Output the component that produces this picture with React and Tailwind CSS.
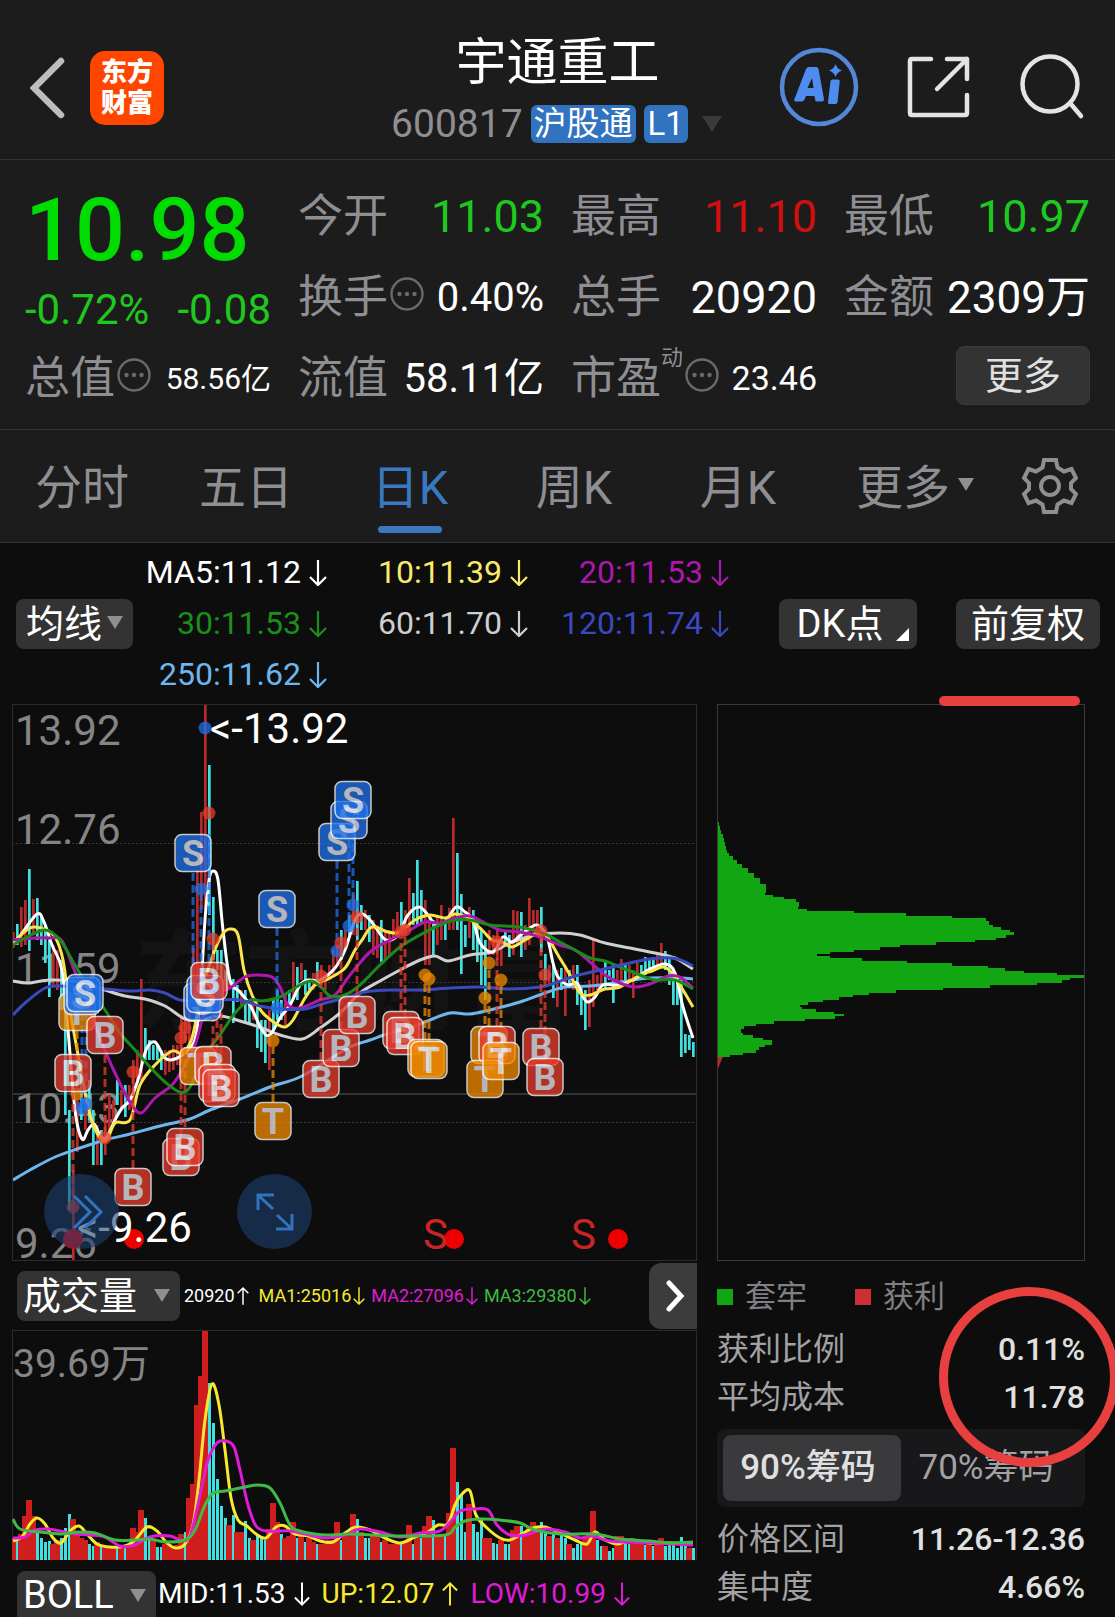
import { useState } from "react";

// Daily candles, oldest first: colour (r = up, c = down), high and low
const CANDLES =
  "r932-948 c924-945 r907-947 r900-945 c869-951 r899-935 c898-940 c915-945 c925-963 c940-997 r945-985 r950-990 c960-1010 c985-1115 c1110-1210 r1170-1261 r1100-1152 c1060-1120 r1095-1130 c1080-1120 c1110-1165 r1125-1165 c1130-1165 r1115-1155 r1095-1140 r1100-1125 c1080-1105 r1090-1110 c1085-1117 r1085-1110 r1060-1100 r1050-1080 r979-1080 c1028-1060 c1040-1060 c1045-1060 c1045-1060 c1050-1070 r1050-1075 r1050-1072 r1045-1070 r1045-1065 r1015-1055 r1010-1040 r1000-1045 r948-1000 r870-980 r812-909 r704-910 c765-915 c897-960 c950-970 c950-990 c970-990 r975-990 c979-1023 c985-1002 r990-1005 c990-1022 c1000-1025 r1000-1020 c1005-1048 c1020-1052 c1020-1063 r1010-1070 c1000-1030 c990-1020 c1000-1020 r995-1025 c990-1010 r962-1000 c967-1000 r963-980 c970-995 c980-990 r973-990 c962-985 r965-985 r972-990 r965-980 r950-975 r945-965 c930-960 r930-950 c915-935 r894-935 c881-940 c905-930 r910-930 c915-942 r920-955 r925-958 c920-962 r930-960 r930-955 r919-940 r912-935 c902-935 r910-930 r878-930 c893-925 c860-925 c890-925 r900-965 r915-965 c920-957 r915-945 r905-940 c920-940 r908-930 r818-930 c853-930 c894-974 c925-947 r907-938 c910-950 c920-962 c930-985 c940-1000 r930-955 r935-955 r930-960 r940-966 c930-945 c935-957 r910-955 r911-945 c912-957 r925-950 r898-945 r910-935 r910-930 c907-952 c954-980 r965-985 c965-998 r970-1007 c968-990 r965-1016 c970-985 r965-990 c965-1005 c985-1015 c990-1030 r980-1027 r938-1007 r975-995 r970-985 c962-990 c970-980 c965-1003 r970-980 r959-985 c965-980 r965-980 r970-998 r963-980 c965-980 c957-975 c960-972 c957-970 r955-970 r943-965 c951-970 c955-985 c970-1005 c975-1005 c980-1057 c1034-1053 c1035-1050 c1042-1057";

const VOLUMES =
  "r22 c20 r26 r44 r60 r44 c28 c22 c18 c19 r16 r20 c22 c32 c46 r41 r28 r22 r20 c16 c14 r18 c14 r14 r14 r13 c12 r12 c12 r13 r32 r28 r50 c42 c24 r20 c13 c13 r16 r16 r14 r15 r26 c28 r62 r76 r155 r184 r229 c177 c137 c81 c54 c42 r35 c45 r28 r28 c39 c22 r20 c24 c24 c20 r31 r57 r38 c26 r22 r24 r38 c22 r24 c18 r22 r18 c16 r16 r16 r20 r20 r38 c20 r24 r28 r46 c41 r28 c22 c22 r26 r24 c18 r20 r16 r16 r16 c16 r18 r35 c16 r24 c22 r34 r44 c40 r24 r26 c24 r47 r112 c78 c65 c28 r56 c36 c28 c40 r22 r22 c17 c16 r20 c16 c16 r30 r34 c34 r28 r34 r38 r32 c38 c28 r24 c26 r22 c26 c22 r16 c12 c16 c16 r24 r26 r49 c20 c14 r14 c9 c12 r24 r24 c20 c16 r16 r16 r17 c15 r18 c14 r18 r22 c14 c15 c15 c12 c23 c14 r12 c12";

const PRICE_LINES = [
  {
    color: "#d0d0d0",
    points:
      "13,981 28,983 50,980 80,982 105,990 125,996 145,999 165,1006 185,1019 200,1020 220,1016 240,1021 262,1028 280,1035 302,1039 320,1028 340,1013 360,993 380,981 400,970 420,960 435,956 448,961 470,955 492,952 510,943 535,935 560,933 580,935 605,943 630,948 655,953 675,958 693,969",
  },
  {
    color: "#6db6ee",
    points:
      "13,1180 30,1170 55,1157 80,1148 105,1140 130,1134 160,1126 190,1119 210,1110 240,1099 270,1087 300,1077 330,1059 350,1047 370,1040 390,1033 410,1028 430,1020 450,1013 470,1014 490,1010 520,1002 545,993 565,987 590,986 620,982 650,978 680,978 693,979",
  },
  {
    color: "#ffffff",
    points:
      "13,943 20,936 37,914 44,922 52,945 62,970 68,1030 75,1110 82,1139 88,1130 94,1124 100,1135 106,1138 115,1120 122,1108 130,1100 138,1080 146,1050 155,1042 165,1058 175,1059 188,1050 196,1035 201,985 205,920 209,880 213,871 218,880 223,930 230,980 240,992 250,1005 262,1030 270,1035 280,1018 290,1005 300,985 308,980 320,980 335,968 345,950 355,920 362,914 370,920 376,928 386,940 398,935 408,915 419,907 428,915 435,924 445,922 456,907 465,912 473,920 480,943 493,952 503,937 512,942 523,933 537,925 547,937 553,963 558,977 568,985 577,983 583,997 588,1002 595,997 603,985 617,985 633,980 648,970 665,964 675,973 683,1007 693,1038",
  },
  {
    color: "#fbe54e",
    points:
      "13,943 30,928 44,929 55,937 63,960 70,1010 80,1065 90,1115 100,1138 107,1140 115,1123 130,1120 140,1085 155,1065 172,1051 182,1053 192,1038 202,990 213,955 222,935 230,929 238,935 244,970 252,995 262,1012 275,1023 285,1027 293,1020 305,998 315,985 330,978 345,968 355,950 362,940 372,927 388,932 400,932 415,920 430,915 445,918 455,914 468,918 482,930 492,940 502,942 512,947 525,940 540,932 548,938 558,955 570,975 580,993 590,995 605,989 620,987 640,975 652,971 663,967 672,973 683,990 693,1007",
  },
  {
    color: "#ae17ae",
    points:
      "13,940 35,938 50,938 62,941 75,972 87,1003 100,1038 115,1073 130,1102 141,1113 155,1098 172,1085 182,1070 195,1045 205,1010 215,995 230,988 245,977 258,975 272,977 280,987 288,1005 300,1008 320,1000 335,995 350,975 370,952 390,940 410,930 425,922 440,923 455,918 470,916 485,923 500,930 520,932 540,937 560,945 575,950 590,962 605,975 620,983 635,987 650,984 668,976 680,977 693,988",
  },
  {
    color: "#1b8a1b",
    points:
      "13,945 25,938 45,930 60,940 75,965 90,990 105,1010 120,1033 135,1050 150,1067 165,1082 180,1092 190,1087 205,1055 220,1035 235,1013 250,1000 262,1001 280,997 300,985 312,981 322,988 330,996 345,995 360,985 380,965 400,947 420,935 440,925 455,920 470,920 490,925 505,926 525,928 545,934 560,942 575,950 590,958 605,961 620,967 640,975 655,980 675,980 693,989",
  },
  {
    color: "#3a49bd",
    points:
      "13,1015 25,1003 45,988 60,986 80,988 105,989 130,991 150,990 165,993 180,1000 200,1000 220,1000 240,1000 260,1006 280,1009 305,1009 325,1003 345,998 365,992 390,990 420,990 450,988 480,987 510,989 540,987 555,983 575,976 600,970 625,964 650,959 672,958 683,961 693,966",
  },
];

const VOLUME_LINES = [
  {
    color: "#f7e92e",
    points:
      "13,1541 22,1537 30,1524 37,1518 45,1524 53,1538 61,1543 70,1531 79,1526 87,1534 97,1544 110,1547 125,1546 135,1540 147,1527 157,1531 167,1543 176,1548 185,1544 193,1525 199,1480 205,1420 212,1384 219,1405 225,1450 231,1498 238,1520 247,1526 256,1534 266,1538 276,1527 285,1526 295,1534 308,1536 320,1541 333,1542 345,1533 356,1527 370,1530 385,1538 400,1543 415,1537 428,1532 438,1525 448,1524 455,1505 462,1494 470,1491 476,1515 487,1528 500,1538 510,1540 520,1535 533,1528 545,1527 560,1533 575,1540 587,1544 595,1532 605,1540 618,1544 630,1540 650,1543 670,1543 693,1544",
  },
  {
    color: "#e01ad8",
    points:
      "13,1538 25,1537 35,1530 48,1529 60,1531 75,1534 90,1535 105,1537 120,1546 135,1545 150,1537 170,1536 180,1540 190,1536 200,1495 208,1460 217,1443 226,1441 234,1447 240,1470 248,1505 256,1526 266,1531 278,1531 290,1531 305,1534 325,1538 345,1535 360,1529 380,1532 400,1537 420,1533 440,1531 452,1520 460,1511 475,1509 488,1510 497,1525 510,1535 525,1535 545,1529 565,1532 580,1538 593,1536 610,1541 650,1543 693,1545",
  },
  {
    color: "#3fba44",
    points:
      "13,1519 20,1529 40,1532 60,1534 80,1532 95,1533 115,1540 135,1540 150,1539 165,1542 185,1540 195,1530 205,1505 213,1493 225,1491 240,1488 258,1485 270,1488 280,1503 290,1525 300,1531 325,1535 350,1534 400,1536 445,1535 455,1527 465,1521 480,1519 500,1520 520,1523 535,1530 560,1534 595,1534 620,1539 650,1541 670,1543 693,1542",
  },
];

// Trade marks: letter, centre x, centre y
const MARKS = [
  ["T", 77, 1012],
  ["S", 82, 996],
  ["S", 85, 993],
  ["B", 105, 1035],
  ["B", 73, 1073],
  ["B", 133, 1187],
  ["B", 181, 1157],
  ["B", 185, 1147],
  ["S", 193, 853],
  ["S", 202, 1002],
  ["S", 205, 994],
  ["B", 209, 981],
  ["T", 198, 1066],
  ["B", 213, 1065],
  ["B", 217, 1083],
  ["B", 221, 1088],
  ["S", 277, 909],
  ["T", 273, 1121],
  ["B", 321, 1079],
  ["B", 341, 1048],
  ["B", 357, 1015],
  ["S", 337, 842],
  ["S", 349, 820],
  ["S", 353, 800],
  ["B", 401, 1030],
  ["B", 405, 1036],
  ["T", 426, 1058],
  ["T", 429, 1060],
  ["T", 489, 1045],
  ["B", 497, 1045],
  ["T", 485, 1079],
  ["T", 501, 1061],
  ["B", 541, 1047],
  ["B", 545, 1077],
];

// Where each trade happened, and how far its dashed leader runs
const TRADES = [
  ["T", 77, 1094, 1031],
  ["S", 82, 1108, 1013],
  ["S", 86, 1104, 1013],
  ["B", 105, 1138, 1055],
  ["B", 73, 1207, 1092],
  ["B", 133, 1072, 1168],
  ["B", 181, 1038, 1137],
  ["B", 185, 1028, 1127],
  ["S", 201, 889, 985],
  ["S", 205, 728, 728],
  ["B", 209, 813, 813],
  ["B", 213, 939, 1046],
  ["B", 217, 983, 1064],
  ["B", 221, 985, 1068],
  ["S", 277, 1008, 928],
  ["T", 273, 1041, 1102],
  ["B", 321, 976, 1060],
  ["S", 337, 951, 861],
  ["B", 341, 943, 1029],
  ["S", 349, 926, 840],
  ["S", 353, 905, 820],
  ["B", 357, 917, 996],
  ["B", 401, 932, 1011],
  ["B", 405, 930, 1017],
  ["T", 425, 975, 1040],
  ["T", 429, 979, 1041],
  ["T", 489, 963, 1026],
  ["B", 497, 942, 1026],
  ["T", 485, 998, 1060],
  ["T", 501, 980, 1042],
  ["B", 541, 931, 1028],
  ["B", 545, 975, 1058],
];

const MARK_COLORS = { B: "#e63c2c", S: "#1f70e8", T: "#ee8900" };

// Chip distribution: depth and bar length for each price step
const CHIPS = [
  [0, 1], [4, 2], [8, 3], [12, 4], [16, 6], [20, 7], [24, 8], [28, 9], [32, 10],
  [35, 12], [38, 16], [42, 20], [46, 25], [50, 31], [55, 37], [60, 43],
  [66, 49], [75, 48], [77, 56], [79, 67], [81, 79], [84, 82], [89, 81],
  [91, 90], [93, 137], [95, 189], [98, 235], [100, 269], [103, 272],
  [107, 276], [109, 284], [112, 293], [114, 297], [117, 289], [120, 279],
  [122, 258], [124, 219], [127, 183], [129, 163], [132, 137], [134, 113],
  [136, 100], [138, 113], [140, 145], [143, 190], [145, 235], [148, 271],
  [150, 288], [153, 307], [155, 340], [157, 368], [160, 353], [162, 345],
  [165, 320], [167, 273], [170, 226], [172, 179], [175, 152], [177, 136],
  [179, 122], [182, 106], [184, 91], [187, 83], [189, 85], [191, 99],
  [194, 117], [196, 127], [198, 118], [201, 88], [203, 57], [206, 39],
  [208, 27], [211, 24], [215, 26], [217, 36], [220, 46], [222, 55], [227, 48],
  [229, 42], [232, 39], [235, 26], [237, 13], [239, 0],
];

const TABS = ["分时", "五日", "日K", "周K", "月K"];

const barColor = (code) => (code === "r" ? "#b8292a" : "#3fe0e0");

const parseLine = (points) => points.split(" ").map((p) => p.split(",").map(Number));

const smooth = (points) => {
  const p = parseLine(points);
  let d = `M${p[0][0]} ${p[0][1]}`;
  for (let i = 0; i < p.length - 1; i++) {
    const a = p[i - 1] || p[i];
    const b = p[i];
    const c = p[i + 1];
    const e = p[i + 2] || c;
    d += `C${b[0] + (c[0] - a[0]) / 6} ${b[1] + (c[1] - a[1]) / 6} ${
      c[0] - (e[0] - b[0]) / 6
    } ${c[1] - (e[1] - b[1]) / 6} ${c[0]} ${c[1]}`;
  }
  return d;
};

const stepPath = () => {
  let d = "M717 818";
  CHIPS.forEach(([y, w]) => {
    d += `V${818 + y}H${717 + w}`;
  });
  return `${d}V1058H717Z`;
};

const Triangle = ({ className }) => (
  <svg viewBox="0 0 16 13" className={className} fill="currentColor" aria-hidden="true">
    <path d="M0 0H16L8 13Z" />
  </svg>
);

const Arrow = ({ up, className }) => (
  <svg
    viewBox="0 0 18 26"
    className={`${className} ${up ? "rotate-180" : ""}`}
    fill="none"
    stroke="currentColor"
    strokeWidth="2.2"
    aria-hidden="true"
  >
    <path d="M9 0V25M1 17L9 25L17 17" />
  </svg>
);

const MoreDots = () => (
  <svg viewBox="0 0 34 34" className="mb-2 ml-[2px] size-[34px] shrink-0 text-[#6a6a6c]" aria-hidden="true">
    <circle cx="17" cy="17" r="15.5" fill="none" stroke="currentColor" strokeWidth="2.4" />
    <circle cx="9.5" cy="17" r="2.2" fill="currentColor" />
    <circle cx="17" cy="17" r="2.2" fill="currentColor" />
    <circle cx="24.5" cy="17" r="2.2" fill="currentColor" />
  </svg>
);

const Dropdown = ({ label, options, className, triangleClass }) => (
  <div className="relative shrink-0">
    <select
      aria-label={label}
      className={`block cursor-pointer appearance-none rounded-lg bg-[#333333] text-[38px] leading-[48px] text-white outline-none ${className}`}
    >
      {options.map((option) => (
        <option key={option}>{option}</option>
      ))}
    </select>
    <Triangle className={`pointer-events-none absolute h-[13px] w-4 text-[#8e8e93] ${triangleClass}`} />
  </div>
);

const Quote = ({ label, value, valueClass = "text-[45px] text-white", info, sup }) => (
  <div className="flex h-[81px] items-center justify-between whitespace-nowrap">
    <span className="flex items-center text-[45px] text-[#8e8e93]">
      {label}
      {sup && <sup className="mb-5 text-[22px] leading-none">{sup}</sup>}
      {info && <MoreDots />}
    </span>
    <span className={valueClass}>{value}</span>
  </div>
);

const MaValue = ({ text, className }) => (
  <span className={`flex items-center justify-end gap-2 ${className}`}>
    {text}
    <Arrow className="h-[26px] w-[18px]" />
  </span>
);

const IndicatorValue = ({ text, up, className }) => (
  <span className={`flex items-center gap-[2px] ${className}`}>
    {text}
    <Arrow up={up} className="h-[26px] w-3" />
  </span>
);

const Header = () => (
  <header className="flex h-40 items-center border-b border-[#333333] px-[30px]">
    <div className="flex flex-1 items-center gap-6 pt-4">
      <button type="button" aria-label="返回">
        <svg viewBox="0 0 36 62" className="h-[62px] w-9" fill="none" stroke="#bdbdbd" strokeWidth="6.5" strokeLinecap="round">
          <path d="M31 4L4 31L31 58" strokeLinejoin="miter" />
        </svg>
      </button>
      <a
        href="#home"
        className="flex size-[74px] flex-col items-center justify-center rounded-[15px] bg-[#ff4600] text-[26px] leading-[31px] font-black text-white"
      >
        <span>东方</span>
        <span>财富</span>
      </a>
    </div>
    <div className="flex flex-col items-center pt-6">
      <h1 className="text-[51px] leading-[64px] text-white">宇通重工</h1>
      <div className="flex items-center gap-2 text-[39px] leading-[58px] text-[#8e8e93]">
        <span>600817</span>
        <span className="rounded-md bg-[#3273c0] px-[3px] text-[33px] leading-[38px] text-white">沪股通</span>
        <span className="rounded-md bg-[#3273c0] px-1 text-[33px] leading-[38px] text-white">L1</span>
        <Triangle className="ml-1 h-4 w-6 text-[#3a3a3a]" />
      </div>
    </div>
    <div className="flex flex-1 items-center justify-end gap-12 pt-[14px]">
      <button type="button" aria-label="AI">
        <svg viewBox="0 0 80 80" className="size-20" fill="#4f8cf0">
          <circle cx="40" cy="40" r="37" fill="none" stroke="#5487d8" strokeWidth="4.5" />
          <path
            fillRule="evenodd"
            d="M27 22Q28 20 30 20H37Q39 20 39.5 22L45 52Q45 54.5 43 54.5H38Q36 54.5 36 52L35.5 49H27L25.5 52.5Q24.5 54.5 22.5 54.5H17Q14.5 54.5 15.5 52ZM33 31L28.5 41H34.5Z"
          />
          <path d="M51.5 34Q51.8 32.5 53.5 32.5H59Q61 32.5 60.7 34.5L58.5 55Q58 57 56.5 57H50.5Q48.5 57 49 55Z" />
          <path d="M56.5 17Q58 22 63 23.5Q58 25 56.5 30Q55 25 50 23.5Q55 22 56.5 17Z" />
        </svg>
      </button>
      <button type="button" aria-label="分享">
        <svg viewBox="0 0 64 64" className="size-16" fill="none" stroke="#e4e4e4" strokeWidth="4.5" strokeLinecap="round" strokeLinejoin="round">
          <path d="M24 4H5Q3 4 3 6V58Q3 60 5 60H58Q60 60 60 58V40M40 4H60V24M60 4L30 34" />
        </svg>
      </button>
      <button type="button" aria-label="搜索">
        <svg viewBox="0 0 66 66" className="size-[66px]" fill="none" stroke="#e4e4e4" strokeWidth="4.5" strokeLinecap="round">
          <circle cx="31" cy="30" r="27.5" />
          <path d="M51 49L62 62" />
        </svg>
      </button>
    </div>
  </header>
);

const QuotePanel = () => (
  <section className="grid grid-cols-4 gap-x-[27px] border-b border-[#333333] px-[25px] pt-4 pb-[10px]">
    <div className="row-span-2">
      <p className="h-[104px] text-[88px] leading-[108px] font-medium text-[#00dc00]">10.98</p>
      <p className="flex h-[58px] items-center justify-between text-[42px] text-[#1ec81e]">
        <span>-0.72%</span>
        <span>-0.08</span>
      </p>
    </div>
    <Quote label="今开" value="11.03" valueClass="text-[45px] text-[#1ec81e]" />
    <Quote label="最高" value="11.10" valueClass="text-[45px] text-[#d01010]" />
    <Quote label="最低" value="10.97" valueClass="text-[45px] text-[#1ec81e]" />
    <Quote label="换手" value="0.40%" valueClass="text-[40px] text-white" info />
    <Quote label="总手" value="20920" />
    <Quote label="金额" value="2309万" valueClass="text-[44px] text-white" />
    <Quote label="总值" value="58.56亿" valueClass="text-[30px] text-white" info />
    <Quote label="流值" value="58.11亿" valueClass="text-[40px] text-white" />
    <Quote label="市盈" sup="动" value="23.46" valueClass="text-[34px] text-white" info />
    <div className="flex h-[81px] items-center justify-end pb-[6px]">
      <button type="button" className="h-[59px] w-[134px] rounded-lg border border-[#3a3a3a] bg-[#333333] text-[38px] leading-none text-[#e0e0e0]">
        更多
      </button>
    </div>
  </section>
);

const PeriodTabs = () => {
  const [active, setActive] = useState("日K");

  return (
    <nav className="grid h-[113px] grid-cols-[164fr_164fr_164fr_164fr_164fr_190fr_105fr] border-b border-[#333333] text-[47px] text-[#8e8e93]">
      {TABS.map((tab) => (
        <button
          key={tab}
          type="button"
          onClick={() => setActive(tab)}
          className={`relative pt-1 ${active === tab ? "text-[#3a78c0]" : ""}`}
        >
          {tab}
          {active === tab && (
            <span className="absolute bottom-[9px] left-1/2 h-[7px] w-16 -translate-x-1/2 rounded-full bg-[#3a78c0]" />
          )}
        </button>
      ))}
      <button type="button" className="flex items-center justify-center gap-2 pt-1">
        更多
        <Triangle className="mb-2 h-[13px] w-4" />
      </button>
      <button type="button" aria-label="设置" className="flex items-center pl-3">
        <svg viewBox="0 0 56 58" className="h-[58px] w-14" fill="none" stroke="currentColor" strokeWidth="4">
          <path d="M22 3H34L35.5 10.5L42 14.5L49.5 12L54 21L49 26V32L54 37L49.5 46L42 43.5L35.5 47.5L34 55H22L20.5 47.5L14 43.5L6.5 46L2 37L7 32V26L2 21L6.5 12L14 14.5L20.5 10.5Z" />
          <circle cx="28" cy="29" r="9" />
        </svg>
      </button>
    </nav>
  );
};

const MaBar = () => (
  <section className="flex h-[161px] items-center pr-[15px] pl-4">
    <Dropdown label="均线" options={["均线"]} className="h-[50px] w-[117px] pl-[10px]" triangleClass="right-[10px] top-[17px]" />
    <div className="grid grid-cols-[194px_201px_201px] text-[32px] leading-[51px]">
      <MaValue text="MA5:11.12" className="text-white" />
      <MaValue text="10:11.39" className="text-[#fbe96a]" />
      <MaValue text="20:11.53" className="text-[#ae17ae]" />
      <MaValue text="30:11.53" className="text-[#1b8f1b]" />
      <MaValue text="60:11.70" className="text-[#cfcfcf]" />
      <MaValue text="120:11.74" className="text-[#3a49bd]" />
      <MaValue text="250:11.62" className="text-[#6db6ee]" />
    </div>
    <div className="ml-auto flex gap-[39px] text-[38px] leading-[48px] text-white">
      <button type="button" className="relative h-[50px] w-[138px] rounded-lg bg-[#333333] pr-4">
        DK点
        <svg viewBox="0 0 13 13" className="absolute right-2 bottom-2 size-[13px]" fill="currentColor" aria-hidden="true">
          <path d="M13 0V13H0Z" />
        </svg>
      </button>
      <button type="button" className="h-[50px] w-[144px] rounded-lg bg-[#333333]">
        前复权
      </button>
    </div>
  </section>
);

const PriceChart = () => (
  <div className="relative">
    <svg viewBox="12 704 685 557" className="block w-full" fontSize="42">
      <text x="133" y="1022" fontSize="110" fontWeight="700" fill="#131313">
        东方财富
      </text>
      <path d="M12 843.5H697M12 982.5H697M12 1122.5H697" stroke="#3a3a3a" strokeDasharray="2 2" />
      <path d="M12 1094H697" stroke="#333333" strokeWidth="2" />
      <g fill="#858585">
        <text x="15" y="745">13.92</text>
        <text x="15" y="844">12.76</text>
        <text x="15" y="983">11.59</text>
        <text x="15" y="1123">10.43</text>
        <text x="15" y="1258">9.26</text>
      </g>
      {CANDLES.split(" ").map((item, i) => {
        const [high, low] = item.slice(1).split("-").map(Number);
        return (
          <rect key={i} x={12 + i * 4} y={high} width="2.7" height={low - high} fill={barColor(item[0])} />
        );
      })}
      {PRICE_LINES.map((line) => (
        <path key={line.color} d={smooth(line.points)} fill="none" stroke={line.color} strokeWidth="3" />
      ))}
      <path d="M193 873V1000M209 962V832" stroke="#1f70e8" strokeWidth="3" strokeDasharray="8 4" opacity="0.75" />
      {TRADES.map(([type, x, y, end]) => (
        <g key={`${x}-${y}`} opacity="0.75">
          <path d={`M${x} ${end}V${y}`} stroke={MARK_COLORS[type]} strokeWidth="3" strokeDasharray="8 4" />
          <circle cx={x} cy={y} r="6.5" fill={MARK_COLORS[type]} />
        </g>
      ))}
      {MARKS.map(([type, x, y]) => (
        <g key={`${x}-${y}`} opacity="0.77">
          <rect x={x - 18} y={y - 18.5} width="36" height="37" rx="7" fill={MARK_COLORS[type]} stroke="#ffffff" strokeWidth="1.5" />
          <text x={x} y={y + 13} fontSize="36" fontWeight="700" textAnchor="middle" fill="#e8e8f0">
            {type}
          </text>
        </g>
      ))}
      <g fill="#ee0000">
        <circle cx="73" cy="1239" r="10" />
        <circle cx="134" cy="1239" r="10" />
        <circle cx="454" cy="1239" r="10" />
        <circle cx="618" cy="1239" r="10" />
      </g>
      <g fill="#c92525">
        <text x="423" y="1249">S</text>
        <text x="571" y="1249">S</text>
      </g>
      <g fill="#ffffff">
        <text x="210" y="743">{"<-13.92"}</text>
        <text x="77" y="1242">{"<-9.26"}</text>
      </g>
      <rect x="12.5" y="704.5" width="684" height="556" fill="none" stroke="#2c2c2c" />
    </svg>
    <button type="button" aria-label="展开" className="absolute bottom-3 left-8 flex size-[75px] items-center justify-center rounded-full bg-[#1c3f6e]/60">
      <svg viewBox="0 0 32 36" className="ml-3 h-9 w-8" fill="none" stroke="#3273c0" strokeWidth="3">
        <path d="M2 2L18 18L2 34M13 2L29 18L13 34" />
      </svg>
    </button>
    <button type="button" aria-label="全屏" className="absolute bottom-3 left-[225px] flex size-[75px] items-center justify-center rounded-full bg-[#1c3f6e]/60">
      <svg viewBox="0 0 38 38" className="size-[38px]" fill="none" stroke="#3273c0" strokeWidth="3">
        <path d="M2 17V2H18M2 2L17 16M36 21V36H20M36 36L21 22" />
      </svg>
    </button>
  </div>
);

const VolumeChart = () => (
  <svg viewBox="12 1330 685 230" className="block w-full">
    <path d="M12 1330.5H697M696.5 1330V1560M12.5 1330V1560M12 1559.5H697" stroke="#2c2c2c" />
    <text x="13" y="1377" fontSize="39" fill="#858585">
      39.69万
    </text>
    {VOLUMES.split(" ").map((item, i) => {
      const up = item[0] === "r";
      const height = Number(item.slice(1));
      return (
        <rect
          key={i}
          x={up ? 10 + i * 4 : 12 + i * 4}
          y={1560 - height}
          width={up ? 6 : 3}
          height={height}
          fill={up ? "#d01e1e" : "#3fe0e0"}
        />
      );
    })}
    {VOLUME_LINES.map((line) => (
      <path key={line.color} d={smooth(line.points)} fill="none" stroke={line.color} strokeWidth="3" />
    ))}
  </svg>
);

const ChipPanel = () => {
  const [range, setRange] = useState("90%筹码");

  return (
    <aside className="flex flex-col">
      <div className="relative">
        <svg viewBox="717 704 368 557" className="block w-full">
          <path d={stepPath()} fill="#12a612" />
          <path d="M717 1057H723L721 1061L718 1069H717Z" fill="#b8292a" />
          <rect x="717.5" y="704.5" width="367" height="556" fill="none" stroke="#3a3a3a" />
        </svg>
        <span className="absolute -top-2 right-[5px] h-[10px] w-[141px] rounded-full bg-[#e8403f]" />
      </div>
      <div className="flex h-16 items-center gap-3 pt-2 text-[31px] text-[#808084]">
        <span className="size-4 bg-[#12a612]" />
        <span>套牢</span>
        <span className="ml-9 size-4 bg-[#cc3030]" />
        <span>获利</span>
      </div>
      <div className="relative">
        <dl className="grid grid-cols-2 text-[32px] leading-[48px] text-[#a2a2a4]">
          <dt>获利比例</dt>
          <dd className="text-right font-medium text-[#e0e0e0]">0.11%</dd>
          <dt>平均成本</dt>
          <dd className="text-right font-medium text-[#e0e0e0]">11.78</dd>
        </dl>
        <span className="pointer-events-none absolute -top-[38px] left-[222px] z-10 size-[180px] rounded-full border-[9px] border-[#e8403f]" />
      </div>
      <div className="mt-2 grid h-[78px] grid-cols-2 rounded-lg bg-[#18181a] p-[6px] text-[35px]">
        {["90%筹码", "70%筹码"].map((option) => (
          <button
            key={option}
            type="button"
            onClick={() => setRange(option)}
            className={`rounded-lg pr-2 ${
              range === option ? "bg-[#3a3a3c] font-medium text-[#e0e0e0]" : "text-[#a2a2a4]"
            }`}
          >
            {option}
          </button>
        ))}
      </div>
      <dl className="mt-2 grid grid-cols-[auto_1fr] text-[32px] leading-[48px] text-[#a2a2a4]">
        <dt>价格区间</dt>
        <dd className="text-right font-medium text-[#e0e0e0]">11.26-12.36</dd>
        <dt>集中度</dt>
        <dd className="text-right font-medium text-[#e0e0e0]">4.66%</dd>
      </dl>
    </aside>
  );
};

const App = () => (
  <main className="min-h-screen overflow-hidden bg-[#0d0d0d] font-['Roboto','Noto_Sans_CJK_SC',sans-serif]">
    <div className="bg-[#1c1c1c]">
      <Header />
      <QuotePanel />
      <PeriodTabs />
    </div>
    <MaBar />
    <div className="grid grid-cols-[685fr_368fr] gap-5 pr-[30px] pl-3">
      <div>
        <PriceChart />
        <div className="flex h-[69px] items-center whitespace-nowrap text-[18px]">
          <div className="flex flex-1 items-center pl-[5px]">
            <Dropdown label="副图指标" options={["成交量"]} className="h-[50px] w-[163px] pl-[6px]" triangleClass="right-[10px] top-[18px]" />
            <div className="ml-1 flex gap-[6px]">
              <IndicatorValue text="20920" up className="mr-1 text-white" />
              <IndicatorValue text="MA1:25016" className="text-[#f7e92e]" />
              <IndicatorValue text="MA2:27096" className="text-[#e01ad8]" />
              <IndicatorValue text="MA3:29380" className="text-[#3fba44]" />
            </div>
          </div>
          <button type="button" aria-label="下一项" className="flex h-[66px] w-12 items-center justify-center rounded-l-xl bg-[#3c3c3c] pl-1">
            <svg viewBox="0 0 20 32" className="h-8 w-5" fill="none" stroke="#ffffff" strokeWidth="5" strokeLinecap="round">
              <path d="M4 3L16 16L4 29" />
            </svg>
          </button>
        </div>
        <VolumeChart />
        <div className="mt-[11px] flex items-center whitespace-nowrap pl-[5px] text-[28px]">
          <Dropdown label="主图指标" options={["BOLL"]} className="h-[46px] w-[139px] rounded-b-none pl-[6px]" triangleClass="right-[10px] top-[18px]" />
          <div className="ml-[2px] flex gap-3">
            <span className="flex items-center gap-2 text-white">
              MID:11.53
              <Arrow className="h-8 w-4" />
            </span>
            <span className="flex items-center gap-2 text-[#f7e92e]">
              UP:12.07
              <Arrow up className="h-8 w-4" />
            </span>
            <span className="flex items-center gap-2 text-[#e01ad8]">
              LOW:10.99
              <Arrow className="h-8 w-4" />
            </span>
          </div>
        </div>
      </div>
      <ChipPanel />
    </div>
  </main>
);

export default App;
